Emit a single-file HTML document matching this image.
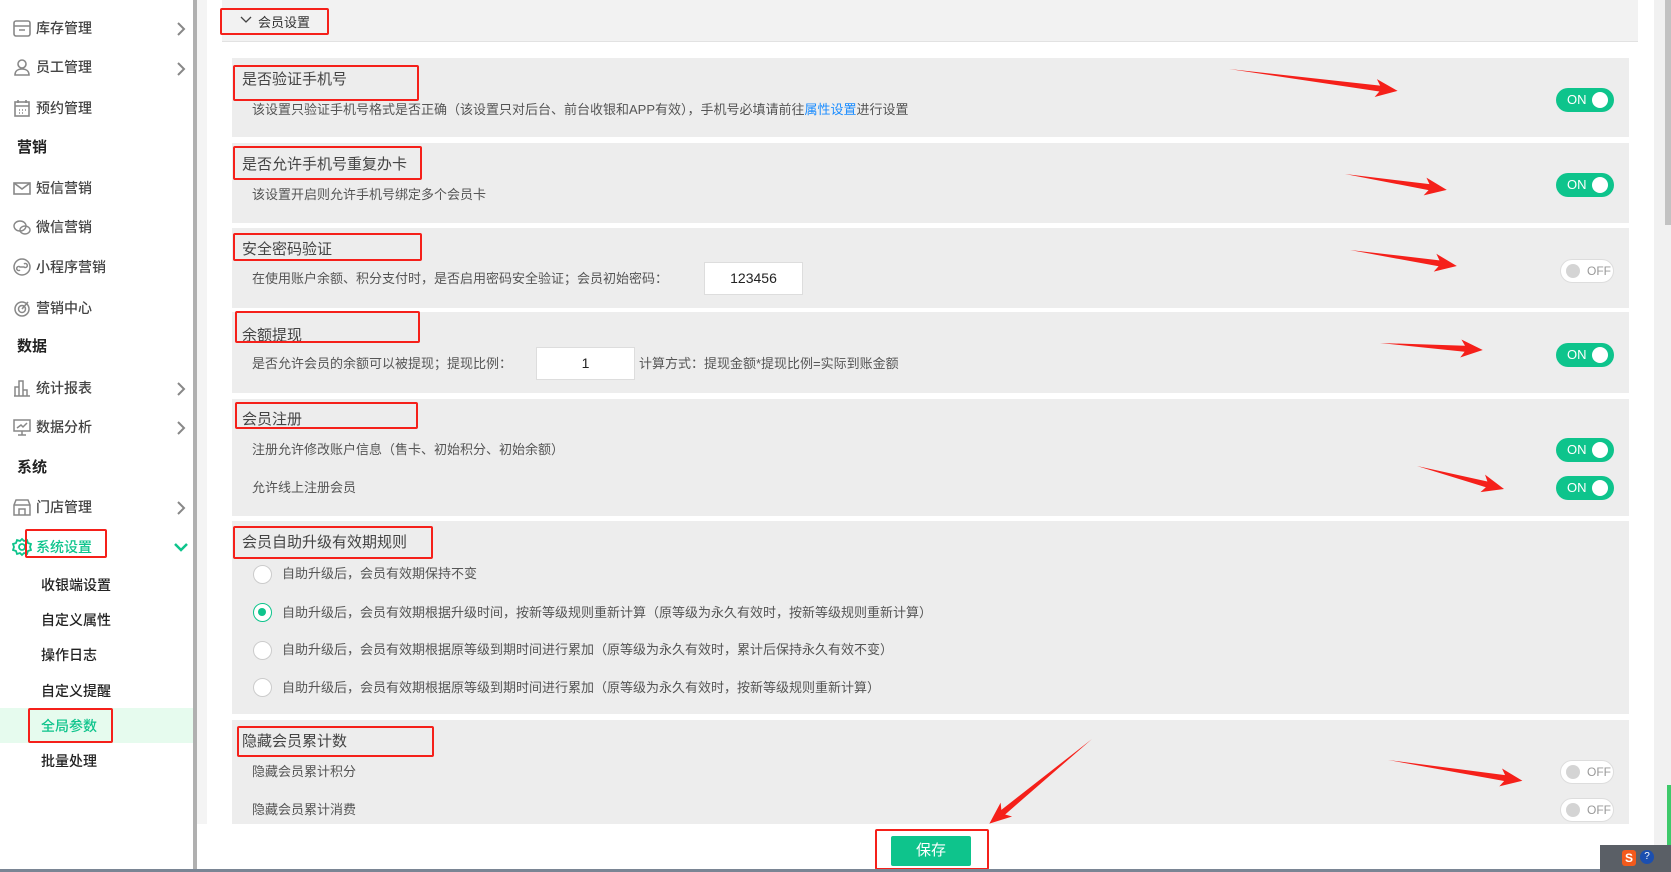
<!DOCTYPE html>
<html><head><meta charset="utf-8"><style>
*{margin:0;padding:0;box-sizing:border-box}
body{width:1671px;height:872px;position:relative;overflow:hidden;background:#fff;font-family:"Liberation Sans","Noto Sans CJK SC",sans-serif;color:#333}
.a{position:absolute;white-space:nowrap}
.mi{position:absolute;left:36px;font-size:14px;color:#444;font-weight:500;line-height:20px}
.gh{position:absolute;left:17px;font-size:15px;color:#222;font-weight:bold;line-height:20px}
.si{position:absolute;left:41px;font-size:14px;color:#222;font-weight:500;line-height:20px}
.ic{position:absolute;left:12px;width:20px;height:20px}
.chev{position:absolute;left:176px;width:10px;height:14px}
.sec{position:absolute;left:232px;width:1397px;background:#ededed}
.tt{position:absolute;left:242px;font-size:15px;color:#444;line-height:20px}
.ds{position:absolute;left:252px;font-size:13px;color:#555;line-height:18px}
.rb{position:absolute;border:2.5px solid #f5201a;border-radius:2px}
.on{position:absolute;left:1556px;width:58px;height:24px;border-radius:12px;background:#0ec48c;color:#fff;font-size:13px;line-height:24px;padding-left:11px}
.on:after{content:"";position:absolute;right:6px;top:4px;width:16px;height:16px;border-radius:50%;background:#fff}
.off{position:absolute;left:1560px;width:54px;height:24px;border-radius:12px;background:#fff;border:1px solid #ddd;color:#999;font-size:12px;line-height:22px;padding-left:26px}
.off:before{content:"";position:absolute;left:5px;top:4px;width:14px;height:14px;border-radius:50%;background:#d4d4d4}
.inp{position:absolute;background:#fff;border:1px solid #ddd;font-size:14px;color:#222;text-align:center}
.rd{position:absolute;left:253px;width:19px;height:19px;border-radius:50%;border:1.5px solid #ccc;background:#fff}
.rd.sel{border-color:#0ec48c}
.rd.sel:after{content:"";position:absolute;left:4px;top:4px;width:8px;height:8px;border-radius:50%;background:#0ec48c}
.rt{position:absolute;left:282px;font-size:13px;color:#555;line-height:18px}
</style></head><body>
<!-- sidebar -->
<div class="a" style="left:193px;top:0;width:4px;height:872px;background:#b0b0b0"></div>
<div class="a" style="left:197px;top:0;width:10px;height:824px;background:#f4f4f4"></div>
<div class="a" style="left:0;top:708px;width:193px;height:35px;background:#e6fbee"></div>

<svg class="ic" style="top:18px" viewBox="0 0 20 20" fill="none" stroke="#888" stroke-width="1.6"><rect x="2" y="3" width="16" height="15" rx="2"/><path d="M2 8h16M7 12h6"/></svg>
<div class="mi" style="top:18px">库存管理</div><svg class="chev" style="top:22px" viewBox="0 0 10 14"><path d="M2 1l6 6-6 6" fill="none" stroke="#888" stroke-width="2"/></svg>
<svg class="ic" style="top:57px" viewBox="0 0 20 20" fill="none" stroke="#888" stroke-width="1.6"><circle cx="10" cy="7" r="4"/><path d="M3 18c0-4 3-6 7-6s7 2 7 6z"/></svg>
<div class="mi" style="top:57px">员工管理</div><svg class="chev" style="top:62px" viewBox="0 0 10 14"><path d="M2 1l6 6-6 6" fill="none" stroke="#888" stroke-width="2"/></svg>
<svg class="ic" style="top:98px" viewBox="0 0 20 20" fill="none" stroke="#888" stroke-width="1.6"><rect x="3" y="4" width="14" height="14"/><path d="M3 8h14M6 2v3M14 2v3M7 12h1M10 12h1M13 12h1M7 15h1M10 15h1"/></svg>
<div class="mi" style="top:98px">预约管理</div>
<div class="gh" style="top:138px">营销</div>
<svg class="ic" style="top:178px" viewBox="0 0 20 20" fill="none" stroke="#888" stroke-width="1.6"><rect x="2" y="5" width="16" height="11"/><path d="M2 5l8 6 8-6"/></svg>
<div class="mi" style="top:178px">短信营销</div>
<svg class="ic" style="top:217px" viewBox="0 0 20 20" fill="none" stroke="#888" stroke-width="1.4"><ellipse cx="8" cy="9" rx="6" ry="5"/><ellipse cx="13" cy="13" rx="5" ry="4"/></svg>
<div class="mi" style="top:217px">微信营销</div>
<svg class="ic" style="top:257px" viewBox="0 0 20 20" fill="none" stroke="#888" stroke-width="1.5"><circle cx="10" cy="10" r="8"/><path d="M8 13a2 2 0 1 1 0-3h4a2 2 0 1 0 0-3"/></svg>
<div class="mi" style="top:257px">小程序营销</div>
<svg class="ic" style="top:298px" viewBox="0 0 20 20" fill="none" stroke="#888" stroke-width="1.5"><circle cx="10" cy="11" r="7"/><circle cx="10" cy="11" r="3.5"/><path d="M10 11l6-7"/></svg>
<div class="mi" style="top:298px">营销中心</div>
<div class="gh" style="top:337px">数据</div>
<svg class="ic" style="top:378px" viewBox="0 0 20 20" fill="none" stroke="#888" stroke-width="1.5"><path d="M3 18V9h4v9M7 18V3h4v15M11 18v-6h4v6M2 18h16"/></svg>
<div class="mi" style="top:378px">统计报表</div><svg class="chev" style="top:382px" viewBox="0 0 10 14"><path d="M2 1l6 6-6 6" fill="none" stroke="#888" stroke-width="2"/></svg>
<svg class="ic" style="top:417px" viewBox="0 0 20 20" fill="none" stroke="#888" stroke-width="1.5"><rect x="2" y="3" width="16" height="11"/><path d="M10 14v4M6 18h8M5 11l4-3 2 2 4-4"/></svg>
<div class="mi" style="top:417px">数据分析</div><svg class="chev" style="top:421px" viewBox="0 0 10 14"><path d="M2 1l6 6-6 6" fill="none" stroke="#888" stroke-width="2"/></svg>
<div class="gh" style="top:458px">系统</div>
<svg class="ic" style="top:497px" viewBox="0 0 20 20" fill="none" stroke="#888" stroke-width="1.5"><path d="M2 8l2-5h12l2 5v10H2zM2 8h16M7 18v-6h6v6"/></svg>
<div class="mi" style="top:497px">门店管理</div><svg class="chev" style="top:501px" viewBox="0 0 10 14"><path d="M2 1l6 6-6 6" fill="none" stroke="#888" stroke-width="2"/></svg>
<svg class="ic" style="top:537px" viewBox="0 0 20 20" fill="none" stroke="#0ec48c" stroke-width="1.8"><circle cx="10" cy="10" r="3"/><path d="M10 2l2 2 3-1 1 3 3 1-1 3 1 3-3 1-1 3-3-1-2 2-2-2-3 1-1-3-3-1 1-3-1-3 3-1 1-3 3 1z"/></svg>
<div class="mi" style="top:537px;color:#0ec48c">系统设置</div>
<svg class="a" style="left:174px;top:542px" width="14" height="10" viewBox="0 0 14 10"><path d="M1 2l6 6 6-6" fill="none" stroke="#0ec48c" stroke-width="2.5"/></svg>
<div class="si" style="top:575px">收银端设置</div>
<div class="si" style="top:610px">自定义属性</div>
<div class="si" style="top:645px">操作日志</div>
<div class="si" style="top:681px">自定义提醒</div>
<div class="si" style="top:716px;color:#0ec48c">全局参数</div>
<div class="si" style="top:751px">批量处理</div>
<div class="rb" style="left:25px;top:529px;width:82px;height:29px"></div>
<div class="rb" style="left:28px;top:708px;width:85px;height:35px"></div>

<!-- header -->
<div class="a" style="left:222px;top:0;width:1416px;height:42px;background:#f2f2f2;border-bottom:1px solid #e2e2e2"></div>
<svg class="a" style="left:240px;top:16px" width="12" height="8" viewBox="0 0 12 8"><path d="M1 1l5 5 5-5" fill="none" stroke="#444" stroke-width="1.3"/></svg>
<div class="a" style="left:258px;top:12px;font-size:13px;color:#333">会员设置</div>
<div class="rb" style="left:220px;top:8px;width:109px;height:27px"></div>

<!-- scrollbar -->
<div class="a" style="left:1654px;top:0;width:17px;height:845px;background:#f1f1f1"></div>
<div class="a" style="left:1665px;top:0;width:6px;height:225px;background:#c2c2c2"></div>
<div class="a" style="left:1667px;top:785px;width:4px;height:60px;background:#3ec96a"></div>

<!-- sections -->
<div class="sec" style="top:58px;height:79px"></div>
<div class="tt" style="top:70px">是否验证手机号</div>
<div class="ds" style="top:101px">该设置只验证手机号格式是否正确（该设置只对后台、前台收银和APP有效），手机号必填请前往<span style="color:#1a8cff">属性设置</span>进行设置</div>
<div class="on" style="top:88px">ON</div>
<div class="rb" style="left:233px;top:65px;width:186px;height:36px"></div>

<div class="sec" style="top:143px;height:80px"></div>
<div class="tt" style="top:155px">是否允许手机号重复办卡</div>
<div class="ds" style="top:186px">该设置开启则允许手机号绑定多个会员卡</div>
<div class="on" style="top:173px">ON</div>
<div class="rb" style="left:233px;top:146px;width:189px;height:34px"></div>

<div class="sec" style="top:228px;height:80px"></div>
<div class="tt" style="top:240px">安全密码验证</div>
<div class="ds" style="top:270px">在使用账户余额、积分支付时，是否启用密码安全验证；会员初始密码：</div>
<div class="inp" style="left:704px;top:262px;width:99px;height:33px;line-height:31px">123456</div>
<div class="off" style="top:259px">OFF</div>
<div class="rb" style="left:233px;top:233px;width:189px;height:28px"></div>

<div class="sec" style="top:312px;height:81px"></div>
<div class="tt" style="top:326px">余额提现</div>
<div class="ds" style="top:355px">是否允许会员的余额可以被提现；提现比例：</div>
<div class="inp" style="left:536px;top:347px;width:99px;height:33px;line-height:31px">1</div>
<div class="ds" style="left:639px;top:355px">计算方式：提现金额*提现比例=实际到账金额</div>
<div class="on" style="top:343px">ON</div>
<div class="rb" style="left:235px;top:311px;width:185px;height:32px"></div>

<div class="sec" style="top:399px;height:117px"></div>
<div class="tt" style="top:410px">会员注册</div>
<div class="ds" style="top:441px">注册允许修改账户信息（售卡、初始积分、初始余额）</div>
<div class="ds" style="top:479px">允许线上注册会员</div>
<div class="on" style="top:438px">ON</div>
<div class="on" style="top:476px">ON</div>
<div class="rb" style="left:235px;top:402px;width:183px;height:27px"></div>

<div class="sec" style="top:521px;height:193px"></div>
<div class="tt" style="top:533px">会员自助升级有效期规则</div>
<div class="rd" style="top:565px"></div><div class="rt" style="top:565px">自助升级后，会员有效期保持不变</div>
<div class="rd sel" style="top:603px"></div><div class="rt" style="top:604px">自助升级后，会员有效期根据升级时间，按新等级规则重新计算（原等级为永久有效时，按新等级规则重新计算）</div>
<div class="rd" style="top:641px"></div><div class="rt" style="top:641px">自助升级后，会员有效期根据原等级到期时间进行累加（原等级为永久有效时，累计后保持永久有效不变）</div>
<div class="rd" style="top:678px"></div><div class="rt" style="top:679px">自助升级后，会员有效期根据原等级到期时间进行累加（原等级为永久有效时，按新等级规则重新计算）</div>
<div class="rb" style="left:233px;top:526px;width:200px;height:33px"></div>

<div class="sec" style="top:720px;height:104px"></div>
<div class="tt" style="top:732px">隐藏会员累计数</div>
<div class="ds" style="top:763px">隐藏会员累计积分</div>
<div class="ds" style="top:801px">隐藏会员累计消费</div>
<div class="off" style="top:760px">OFF</div>
<div class="off" style="top:798px">OFF</div>
<div class="rb" style="left:237px;top:726px;width:197px;height:31px"></div>

<!-- save -->
<div class="a" style="left:891px;top:836px;width:80px;height:30px;background:#0ec48c;color:#fff;font-size:15px;line-height:30px;text-align:center;border-radius:2px">保存</div>
<div class="rb" style="left:875px;top:829px;width:114px;height:41px"></div>

<!-- taskbar -->
<div class="a" style="left:0;top:869px;width:1671px;height:3px;background:#7a8594"></div>
<div class="a" style="left:1600px;top:845px;width:71px;height:27px;background:#5a5f66"></div>
<div class="a" style="left:1622px;top:850px;width:14px;height:16px;background:#f25a1c;color:#fff;font-size:12px;font-weight:bold;line-height:16px;text-align:center;border-radius:3px">S</div>
<div class="a" style="left:1640px;top:850px;width:14px;height:14px;background:#1b4fb0;color:#fff;font-size:10px;line-height:14px;text-align:center;border-radius:50%">?</div>

<!-- arrows -->
<svg class="a" style="left:0;top:0" width="1671" height="872" fill="#f5201a">
<g transform="translate(1229,69) rotate(7.4)"><path d="M0 0L152 -3L148 -9L170 0L148 9L152 3Z"/></g>
<g transform="translate(1345,174) rotate(8.9)"><path d="M0 0L85 -3L81 -9L103 0L81 9L85 3Z"/></g>
<g transform="translate(1350,250) rotate(8.5)"><path d="M0 0L90 -3L86 -9L108 0L86 9L90 3Z"/></g>
<g transform="translate(1380,343) rotate(3.9)"><path d="M0 0L85 -3L81 -9L103 0L81 9L85 3Z"/></g>
<g transform="translate(1417,466) rotate(14.8)"><path d="M0 0L72 -3L68 -9L90 0L68 9L72 3Z"/></g>
<g transform="translate(1388,760) rotate(8.8)"><path d="M0 0L118 -3L114 -9L136 0L114 9L118 3Z"/></g>
<g transform="translate(1092,739) rotate(140.5)"><path d="M0 0L115 -3L111 -9L133 0L111 9L115 3Z"/></g>
</svg>
</body></html>
